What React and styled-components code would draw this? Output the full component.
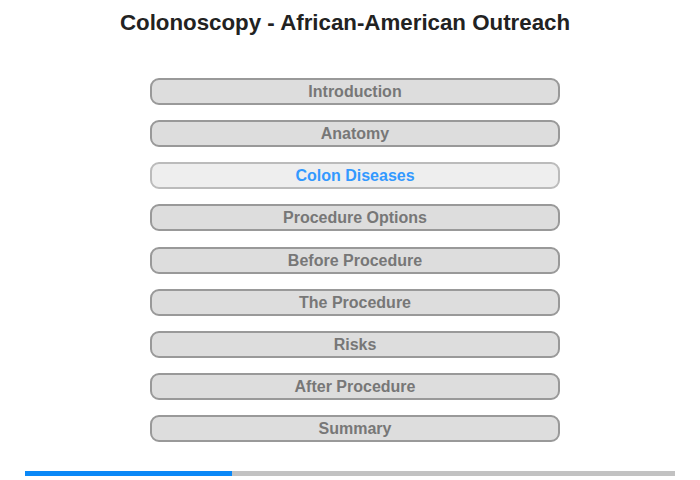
import React from "react";
import styled, { createGlobalStyle } from "styled-components";

const Global = createGlobalStyle`
  html, body { margin: 0; padding: 0; background: #fff; }
  body { font-family: "Liberation Sans", Arial, sans-serif; }
`;

const Page = styled.div`
  width: 700px;
  height: 480px;
  display: flex;
  flex-direction: column;
  box-sizing: border-box;
  padding-top: 11px;
`;

const Title = styled.h1`
  margin: 0;
  padding-right: 10px;
  font-size: 22.3px;
  line-height: 24px;
  font-weight: bold;
  color: #222;
  text-align: center;
`;

const Nav = styled.nav`
  margin: 43px 0 0 150px;
  width: 410px;
  display: flex;
  flex-direction: column;
  gap: 15.125px;
`;

const NavButton = styled.div`
  box-sizing: border-box;
  height: 27px;
  border: 2px solid ${(p) => (p.$active ? "#bbb" : "#999")};
  border-radius: 9px;
  background: ${(p) => (p.$active ? "#eee" : "#ddd")};
  color: ${(p) => (p.$active ? "#3399ff" : "#777")};
  font-size: 16px;
  font-weight: bold;
  line-height: 23px;
  text-align: center;
`;

const Track = styled.div`
  margin: 29px 0 0 25px;
  width: 650px;
  height: 4.5px;
  background: #c2c2c2;
  display: flex;
`;

const Fill = styled.div`
  height: 100%;
  background: #0a88f7;
`;

const items = [
  "Introduction",
  "Anatomy",
  "Colon Diseases",
  "Procedure Options",
  "Before Procedure",
  "The Procedure",
  "Risks",
  "After Procedure",
  "Summary",
];

export default function App() {
  const active = 2;
  const progress = 207 / 650;
  return (
    <Page>
      <Global />
      <Title>Colonoscopy - African-American Outreach</Title>
      <Nav>
        {items.map((t, i) => (
          <NavButton key={t} $active={i === active}>
            {t}
          </NavButton>
        ))}
      </Nav>
      <Track>
        <Fill style={{ width: `${progress * 100}%` }} />
      </Track>
    </Page>
  );
}
